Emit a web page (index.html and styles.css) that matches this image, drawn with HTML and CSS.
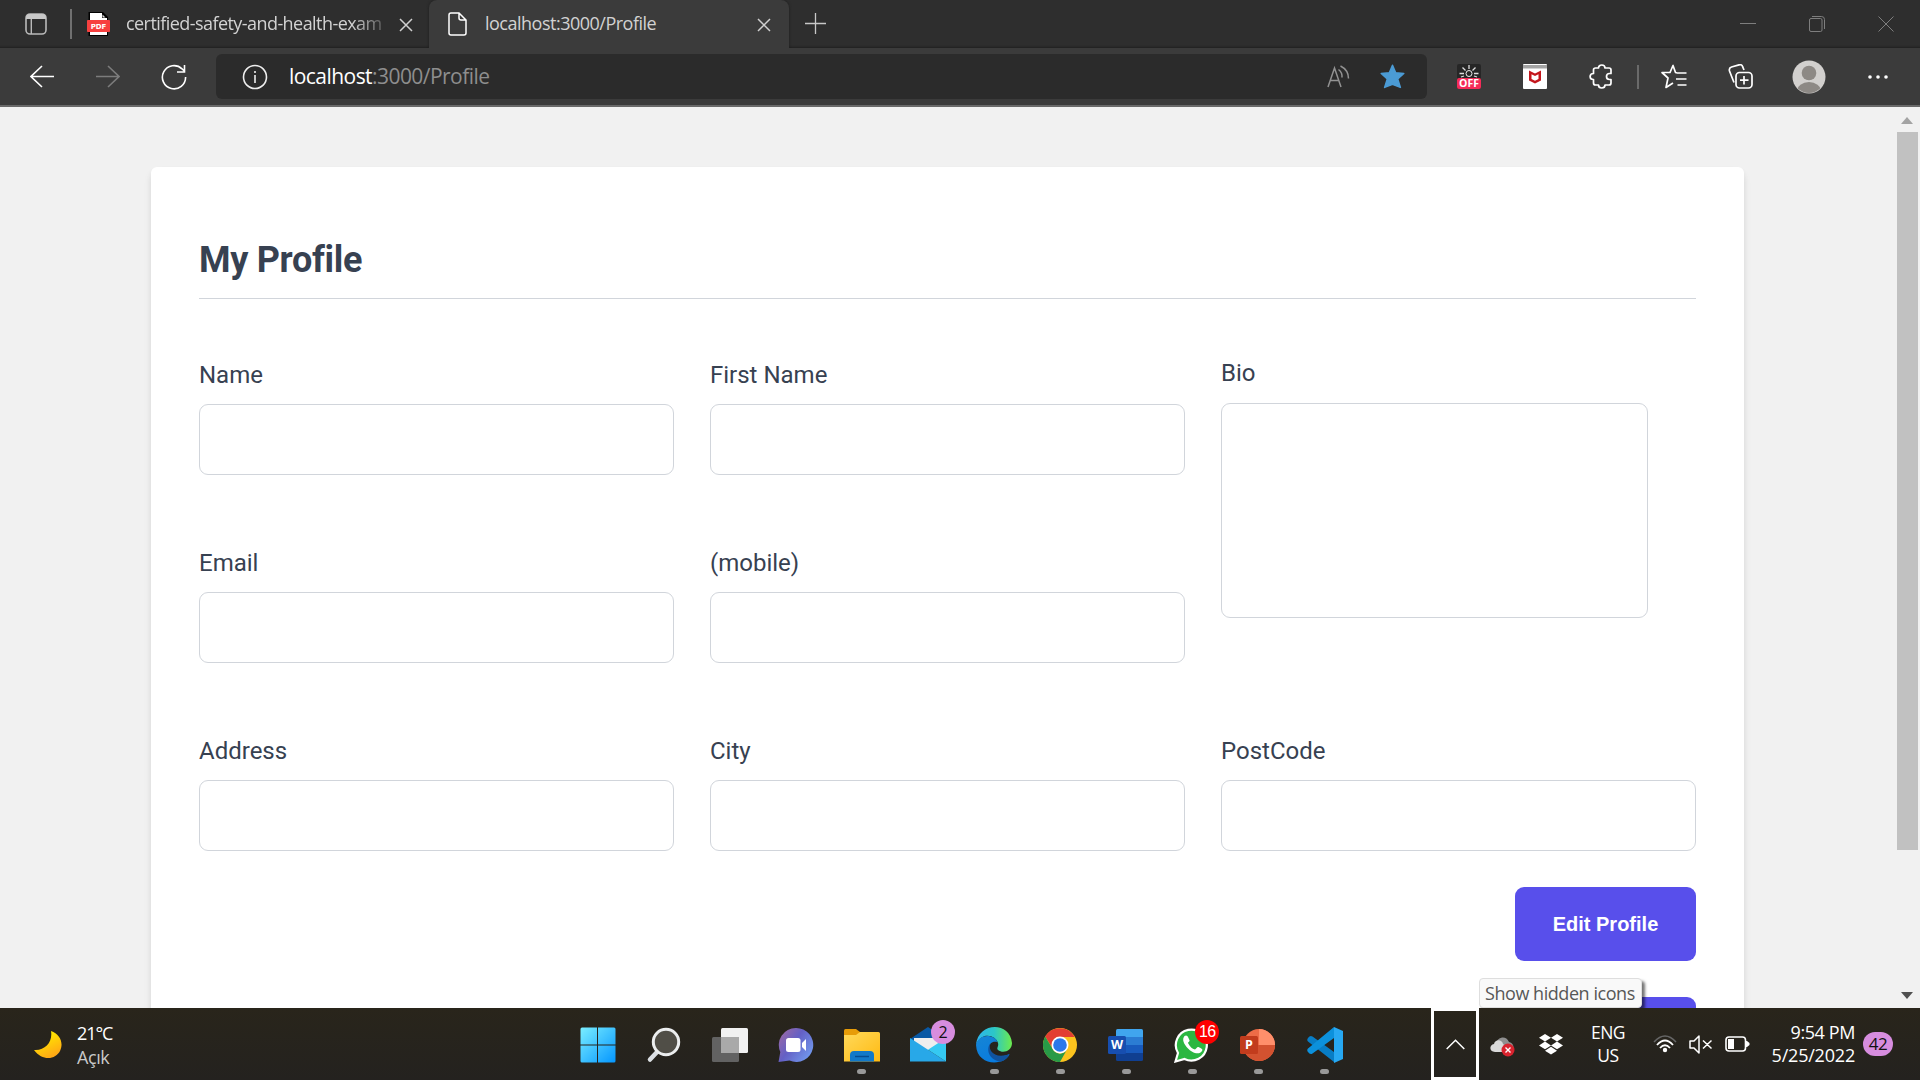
FILE: index.html
```html
<!DOCTYPE html>
<html lang="en">
<head>
<meta charset="utf-8">
<title>localhost:3000/Profile</title>
<link rel="stylesheet" href="styles.css">
</head>
<body>
<div class="screen">
  <header class="tabbar">
    <div class="tab-actions"><svg width="22" height="22" viewBox="0 0 22 22"><rect x="1" y="1" width="20" height="20" rx="4" fill="none" stroke="#b9b9b9" stroke-width="1.6"/><path d="M1 6V5a4 4 0 0 1 4-4h12a4 4 0 0 1 4 4v1z" fill="#c8c8c8"/><path d="M6.3 6v15" stroke="#b9b9b9" stroke-width="1.4"/></svg></div>
    <div class="tab">
      <svg width="23" height="24" viewBox="0 0 23 24"><path d="M1.500 0H16l5 5v19H1.500z" fill="#000"/><path d="M3 1h12v5h5v17H3z" fill="#fff"/><path d="M15.500 2.500l3 3h-3z" fill="#ddd"/><rect y="8" width="23" height="12" rx=".8" fill="#f7403f"/><text x="11.500" y="17" class="pdf-text">PDF</text></svg>
      <span class="tab-title faded">certified-safety-and-health-exam</span>
      <svg class="tab-close" width="14" height="14" viewBox="0 0 14 14"><path d="M1 1l12 12M13 1L1 13" stroke="#d0d0d0" stroke-width="1.5"/></svg>
    </div>
    <div class="tab active">
      <svg width="20" height="24" viewBox="0 0 20 24"><path d="M3 1h8l7 7v13a2 2 0 0 1-2 2H3a2 2 0 0 1-2-2V3a2 2 0 0 1 2-2zM11 1v5a2 2 0 0 0 2 2h5" fill="none" stroke="#fff" stroke-width="1.500"/></svg>
      <span class="tab-title">localhost:3000/Profile</span>
      <svg class="tab-close" width="14" height="14" viewBox="0 0 14 14"><path d="M1 1l12 12M13 1L1 13" stroke="#d0d0d0" stroke-width="1.500"/></svg>
    </div>
    <svg class="new-tab" width="21" height="21" viewBox="0 0 21 21"><path d="M10.500 0v21M0 10.500h21" stroke="#c8c8c8" stroke-width="1.300"/></svg>
    <div class="window-controls">
      <span><svg width="16" height="16"><path d="M0 7.500h16" stroke="#7e7e7e"/></svg></span>
      <span><svg width="16" height="16" fill="none" stroke="#7e7e7e"><rect x=".5" y="2.500" width="12.500" height="13" rx="1.500"/><path d="M3 .5h9.500a3 3 0 0 1 3 3V13"/></svg></span>
      <span><svg width="16" height="16"><path d="M.5.5l15 15M15.500.5l-15 15" stroke="#7e7e7e"/></svg></span>
    </div>
  </header>

  <nav class="toolbar">
    <div class="nav-buttons">
      <span><svg width="24" height="24" fill="none" stroke="#fff" stroke-width="1.600"><path d="M24 11.500H1M12 1L1 11.500 12 22"/></svg></span>
      <span><svg width="24" height="24" fill="none" stroke="#7c7c7c" stroke-width="1.600"><path d="M0 11.500h23M12 1l11 10.500L12 22"/></svg></span>
      <span><svg width="26" height="26" fill="none" stroke="#fff" stroke-width="1.600"><path d="M24.600 13A11.600 11.600 0 1 1 21 4.800l2 2M23.500 1v7H16"/></svg></span>
    </div>
    <div class="address">
      <svg width="26" height="26" fill="none" stroke="#eee" stroke-width="1.600"><circle cx="13" cy="13" r="11.500"/><path d="M13 11v8M13 7v2" /></svg>
      <span class="url"><b>localhost</b>:3000/Profile</span>
      <svg class="read-aloud" width="23" height="23" fill="none" stroke="#929292" stroke-width="1.500"><path d="M1 22L7.500 3 14 22M3.500 15.500h8M11.500 4.500q4 3 3.500 8M13.500 1q8 4 8 12.500"/></svg>
      <svg width="25" height="25" viewBox="0 0 25 25"><path d="M12.500 1.200l3.200 7.500 8.100.8-6.100 5.500 2.700 8.400-7.900-3-7.900 3L7.300 15 1.200 9.500l8.100-.8z" fill="#4b9bd5" stroke="#4b9bd5" stroke-width="1.500" stroke-linejoin="round"/></svg>
    </div>
    <div class="tools">
      <span><svg width="24" height="25" viewBox="0 0 24 25"><rect width="24" height="25" rx="2" fill="#262626"/><circle cx="12" cy="9.500" r="3" fill="none" stroke="#eee"/><path d="M12 1v4M5.500 3.500l3 3M18.500 3.500l-3 3M2.500 9.500h4.500M21.500 9.500H17M4 13l3-1M20 13l-3-1" stroke="#ddd" stroke-width="1.300"/><rect y="14" width="24" height="11" rx="2" fill="#f52b58"/><text x="12" y="23.300" class="off-text">OFF</text></svg></span>
      <span><svg width="24" height="25" viewBox="0 0 24 25"><rect width="24" height="25" rx="1" fill="#fff"/><path d="M0 1h24v3.500H0z" fill="#a4a4a4"/><path d="M6 6.500l6 3 6-3v10l-6 3-6-3zM8.500 10.300V15l3.500 1.800 3.500-1.800v-4.700L12 12z" fill="#c4161c" fill-rule="evenodd"/></svg></span>
      <span><svg width="24" height="25" viewBox="0 0 24 25"><path d="M6.500 4H9.500C9.500 0 16 0 16 4h4q2 0 2 2v3.500h-1.500c-4 0-4 6 0 6H22V19q0 2-2 2h-4c0 4-6.500 4-6.500 0h-3q-2 0-2-2v-3.500c-4.500 0-4.500-6 0-6V6q0-2 2-2z" fill="none" stroke="#fff" stroke-width="1.700" stroke-linejoin="round"/></svg></span>
      <i class="divider"></i>
      <span><svg width="26" height="25" viewBox="0 0 26 25" fill="none" stroke="#fff" stroke-width="1.700" stroke-linejoin="round"><path d="M16 9l-1.500-.5L12 1.500 9 8.500H1l6 5.500-2 9.500L12 19M16 9h9.500M15 15h10.500M16.500 21h9"/></svg></span>
      <span><svg width="25" height="25" viewBox="0 0 25 25" fill="none" stroke="#fff" stroke-width="1.700"><rect x="8" y="8.500" width="16" height="15.500" rx="3.500"/><path d="M16 12v8.500M12 16.200h8.500M6 18.500L1.500 7q-.8-3 2-4L11 .9q3-.7 3.500 1.500L16 6"/></svg></span>
      <span class="avatar-cell"><svg width="34" height="34" viewBox="0 0 34 34"><clipPath id="face"><circle cx="17" cy="17" r="16"/></clipPath><circle cx="17" cy="17" r="16.500" fill="#d2d0ce"/><g fill="#8d8985" clip-path="url(#face)"><circle cx="17" cy="13" r="7.300"/><ellipse cx="17" cy="31" rx="12" ry="9"/></g></svg></span>
      <span><svg width="20" height="4" fill="#fff"><circle cx="2" cy="2" r="1.800"/><circle cx="10" cy="2" r="1.800"/><circle cx="18" cy="2" r="1.800"/></svg></span>
    </div>
  </nav>

  <div class="viewport">
    <main class="card">
      <h1>My Profile</h1>
      <form class="fields">
        <label class="field">Name<input type="text"></label>
        <label class="field">First Name<input type="text"></label>
        <label class="field bio">Bio<textarea></textarea></label>
        <label class="field">Email<input type="text"></label>
        <label class="field">(mobile)<input type="text"></label>
        <label class="field">Address<input type="text"></label>
        <label class="field">City<input type="text"></label>
        <label class="field">PostCode<input type="text"></label>
      </form>
      <div class="actions">
        <button type="button">Edit Profile</button>
        <button type="button"></button>
      </div>
    </main>
    <aside class="scrollbar">
      <svg width="12" height="7"><path d="M0 7l6-7 6 7z" fill="#a3a3a3"/></svg>
      <div class="thumb"></div>
      <svg width="12" height="7"><path d="M0 0h12L6 7z" fill="#505050"/></svg>
    </aside>
    <div class="tooltip">Show hidden icons</div>
  </div>

  <footer class="taskbar">
    <div class="weather">
      <svg width="30" height="30" viewBox="0 0 30 30"><defs><linearGradient id="moon" x1="0" y1="0" x2=".5" y2="1"><stop offset=".3" stop-color="#ffe500"/><stop offset="1" stop-color="#ffa915"/></linearGradient></defs><path d="M18 1C27 4 31 13 27 21S10 32 1 20C12 21 20 12 18 1z" fill="url(#moon)"/></svg>
      <div><div>21°C</div><div class="condition">Açık</div></div>
    </div>
    <div class="apps">
      <span><svg width="36" height="36" viewBox="0 0 36 36"><defs><linearGradient id="win" x1="0" y1="0" x2="1" y2="1"><stop stop-color="#7aeeff"/><stop offset="1" stop-color="#0496ff"/></linearGradient></defs><path d="M2 .5h15v17H.5V2Q.5.500 2 .5zM18 .5h16q1.500 0 1.500 1.500v15.500H18zM.5 18.500H17v17H2q-1.500 0-1.500-1.500zM18 18.500h17.500V34q0 1.500-1.500 1.500H18z" fill="url(#win)"/></svg></span>
      <span><svg width="36" height="36" viewBox="0 0 36 36"><path d="M12 24L4 32.500" stroke="#dce0e4" stroke-width="4.500" stroke-linecap="round"/><circle cx="20" cy="15" r="12.700" fill="#504e47" stroke="#eceeef" stroke-width="3"/></svg></span>
      <span><svg width="36" height="36" viewBox="0 0 36 36"><rect y="10" width="27" height="25" rx="1.500" fill="#626262"/><rect x="9" y="1" width="27" height="25" rx="1.500" fill="#f1f1f1"/><path d="M9 10h18v16H9z" fill="#a9a9a9"/></svg></span>
      <span><svg width="36" height="36" viewBox="0 0 36 36"><defs><linearGradient id="chat" x1="0" y1="0" x2="1" y2=".7"><stop stop-color="#a56a9f"/><stop offset=".5" stop-color="#6460c5"/><stop offset="1" stop-color="#7197ec"/></linearGradient></defs><path d="M18 1a17 17 0 1 1-6.500 32.600L.5 35l1.800-10A17 17 0 0 1 18 1z" fill="url(#chat)"/><rect x="8" y="11" width="14.500" height="14" rx="2.500" fill="#fff"/><path d="M24 16l4-4v12l-4-4z" fill="#fff"/></svg></span>
      <span class="running"><svg width="36" height="36" viewBox="0 0 36 36"><defs><linearGradient id="folder" x1="0" y1="0" x2="1" y2="1"><stop stop-color="#ffd95b"/><stop offset="1" stop-color="#ffba12"/></linearGradient></defs><path d="M0 8V3.500Q0 2 1.500 2H12l4 3v4z" fill="#e79c08"/><path d="M0 8h12l4-3h18.500Q36 5 36 6.500V34.500H0z" fill="url(#folder)"/><path d="M6 34.500V28q0-4 4-4h16q4 0 4 4v6.500z" fill="#1279c9"/><path d="M11 29.500h14" stroke="#064c91" stroke-width="1.500"/></svg></span>
      <span><svg width="36" height="36" viewBox="0 0 36 36"><path d="M0 12L18 0l18 12v8H0z" fill="#0858a4"/><path d="M4 11h28v12H4z" fill="#eee"/><path d="M0 11l36 23.500H0z" fill="#28a8e8"/><path d="M36 11L18 22.800 36 34.500z" fill="#35c9f2"/></svg><em class="badge mail">2</em></span>
      <span class="running"><svg width="36" height="36" viewBox="0 0 36 36"><defs><linearGradient id="edgeTop"><stop stop-color="#2eb5ed"/><stop offset=".5" stop-color="#2cc6c8"/><stop offset="1" stop-color="#6ceb4d"/></linearGradient><linearGradient id="edgeLeft" x1="0" y1="0" x2=".6" y2="1"><stop stop-color="#1685d4"/><stop offset="1" stop-color="#087be0"/></linearGradient></defs><path d="M0 18C2-5 34-6 36 16c0 8-9 11-14 7-2-2 1-3 0-7-2-8-17-12-22 2z" fill="url(#edgeTop)"/><path d="M0 18C2 6 19 7 21.500 15 14 13 11 20 15 25c5 6 12 5 18.500 2C29 39 1 40 0 18z" fill="url(#edgeLeft)"/><path d="M15 16c-6 5-2 18 10 18.500 4-1 7-4 8.500-7.500-8 3-15 2-18.500-3-1.700-3-1.500-6 0-8z" fill="#10539f"/></svg></span>
      <span class="running"><svg width="36" height="36" viewBox="0 0 36 36"><circle cx="18" cy="18" r="17" fill="#fbc31e"/><path d="M3.200 9.600A17 17 0 0 1 32.800 10H18a8 8 0 0 0-7 12z" fill="#e33e33"/><path d="M3.200 9.600A17 17 0 0 0 18 35l7-12.500a8 8 0 0 1-14 0z" fill="#289a47"/><circle cx="18" cy="18" r="8.500" fill="#fff"/><circle cx="18" cy="18" r="6.800" fill="#2c78ea"/></svg></span>
      <span class="running"><svg width="36" height="36" viewBox="0 0 36 36"><path d="M8 3.500Q8 2 9.500 2h24Q35 2 35 3.500V10H8z" fill="#40a5ee"/><path d="M8 10h27v8H8z" fill="#2b7cd3"/><path d="M8 18h27v8H8z" fill="#185abd"/><path d="M8 26h27v6.500q0 1.500-1.500 1.500h-24Q8 34 8 32.500z" fill="#103f91"/><rect y="9" width="18" height="18" rx="1.500" fill="#174eaf"/><text x="9" y="22.300" class="office-text">W</text></svg></span>
      <span class="running"><svg width="36" height="36" viewBox="0 0 36 36"><path d="M1.500 34.500L4 26A15.500 15.500 0 1 1 10.500 32z" fill="#2bb741" stroke="#fff" stroke-width="2.200"/><path d="M10.500 9c3-2 4 2 5 4 .6 1.400-1.500 2-1.500 3 2 4 4 5.500 7 6.500 1.500-1 2-3 3.500-2.500 2 1 5 2 3.500 4-3 5-11 1-14-2.500-4-4-6.500-9-3.500-12.500z" fill="#fff"/></svg><em class="badge chat">16</em></span>
      <span class="running"><svg width="36" height="36" viewBox="0 0 36 36"><circle cx="19" cy="18" r="16" fill="#ed6c47"/><path d="M19 2a16 16 0 0 1 16 16H19z" fill="#ff8f6b"/><path d="M3 18h32a16 16 0 0 1-32 0z" fill="#d35230"/><rect y="9" width="18" height="18" rx="1.500" fill="#c23c1d"/><text x="9" y="22.300" class="office-text">P</text></svg></span>
      <span class="running"><svg width="36" height="36" viewBox="0 0 36 36"><path d="M1 11q2-3 4.500-1.500L27 25v10L1 14.500Q-.5 13 1 11z" fill="#087dc5"/><path d="M1 25q2 3 4.500 1.500L27 11V0L1 21.500Q-.5 23 1 25z" fill="#0c91dc"/><path d="M27 0l9 4v28l-9 4z" fill="#27a8f2"/></svg></span>
    </div>
    <div class="tray">
      <span class="chevron"><svg width="19" height="11"><path d="M.7 10L9.500 1.200 18.300 10" fill="none" stroke="#fff" stroke-width="1.500"/></svg></span>
      <span class="cloud"><svg width="25" height="21" viewBox="0 0 25 21"><path d="M6 7C8 1 16-1 19 6q5 1 4.500 7H10z" fill="#8f8f8f"/><path d="M5 16c-6 0-6-7-1-8 1-5 8-5 9 0l6 5v3z" fill="#d9d9d9"/><circle cx="18" cy="14" r="6.500" fill="#d9232e"/><path d="M15.500 11.500l5 5M20.500 11.500l-5 5" stroke="#fff" stroke-width="1.400"/></svg></span>
      <span class="dropbox"><svg width="24" height="21" viewBox="0 0 24 21" fill="#fff"><path d="M6 0l6 3.800-6 3.800L0 3.800zM18 0l6 3.800-6 3.800-6-3.800zM6 7.600l6 3.800-6 3.800-6-3.800zM18 7.600l6 3.800-6 3.800-6-3.800zM12 12.800l6 3.900-6 3.900-6-3.900z"/></svg></span>
      <div class="lang"><div>ENG</div><div>US</div></div>
      <div class="status">
        <svg width="24" height="18" viewBox="0 0 24 18" fill="none"><path d="M1 7Q12-5 23 7" stroke="#666" stroke-width="1.500"/><path d="M4 10Q12 1 20 10M7 13Q12 7.500 17 13" stroke="#fff" stroke-width="1.800"/><circle cx="12" cy="15" r="2.200" fill="#fff"/></svg>
        <svg width="24" height="19" viewBox="0 0 24 19" fill="none" stroke="#fff" stroke-width="1.500"><path d="M1 6h4l5-5v17l-5-5H1zM14 5.500l8.500 8M22.500 5.500l-8.500 8" stroke-linejoin="round"/></svg>
        <svg width="25" height="16" viewBox="0 0 25 16"><rect x="1" y="1" width="19.500" height="14" rx="3" fill="none" stroke="#fff" stroke-width="1.600"/><path d="M3 3h6v10H3zM21 5h1l2.500 2v2L22 11h-1z" fill="#fff"/></svg>
      </div>
      <div class="clock"><div>9:54 PM</div><div class="date">5/25/2022</div></div>
      <em class="notifications">42</em>
    </div>
  </footer>
</div>
</body>
</html>
```
FILE: styles.css
```css
* { box-sizing: border-box; }
body { margin: 0; overflow: hidden; font-family: "Open Sans", "Noto Sans", sans-serif; }
svg { display: block; flex: none; }
em { font-style: normal; }
.screen { width: 1920px; height: 1080px; display: flex; flex-direction: column; overflow: hidden; }

.tabbar { height: 48px; background: #2e2e2e; display: flex; align-items: center; color: #d2d2d2; box-shadow: inset 0 -3px 2px -2px #202020; }
.tab-actions { width: 72px; height: 30px; display: flex; align-items: center; padding-left: 25px; border-right: 2px solid #707070; }
.tab { height: 48px; display: flex; align-items: center; width: 357px; padding: 0 16px 0 15px; }
.tab.active { width: 360px; padding: 0 18px 0 19px; background: #3b3b3b; border-radius: 8px 8px 0 0; box-shadow: 0 0 3px #1d1d1d; clip-path: inset(0 -4px 0 -4px); }
.tab-title { font-size: 18px; letter-spacing: -.5px; white-space: nowrap; margin-left: 17px; line-height: 26px; padding-bottom: 2px; }
.tab-title.faded { width: 262px; margin-left: 16px; letter-spacing: -.56px; -webkit-mask-image: linear-gradient(90deg, #000 86%, rgba(0,0,0,.15)); mask-image: linear-gradient(90deg, #000 86%, rgba(0,0,0,.15)); }
.tab-close { margin-left: auto; margin-top: 2px; }
.new-tab { margin-left: 16px; margin-bottom: 1px; }
.window-controls { margin-left: auto; display: flex; }
.window-controls span { width: 69px; display: flex; justify-content: center; }
.pdf-text { font: 700 7px "DejaVu Sans", sans-serif; fill: #fff; text-anchor: middle; }

.toolbar { height: 59px; background: #3b3b3b; border-bottom: 2px solid #696969; display: flex; align-items: center; }
.nav-buttons { display: flex; width: 216px; padding-left: 9px; }
.nav-buttons span { width: 66px; display: flex; align-items: center; justify-content: center; }
.address { width: 1211px; height: 45px; border-radius: 6px; background: #2b2b2b; display: flex; align-items: center; padding: 0 22px 0 26px; }
.url { margin-left: 21px; font-size: 21px; letter-spacing: -.55px; color: #8e8e8e; line-height: 30px; padding-bottom: 2px; }
.url b { font-weight: 400; color: #fff; }
.read-aloud { margin-left: auto; margin-right: 30px; }
.tools { display: flex; align-items: center; padding-left: 9px; }
.tools span { width: 66px; display: flex; justify-content: center; }
.tools .divider { width: 2px; height: 24px; margin: 0 2px 0 3px; background: #6a6a6a; }
.tools .avatar-cell { width: 72px; }
.off-text { font: 700 10.5px "Open Sans", sans-serif; fill: #fff; text-anchor: middle; }

.viewport { height: 901px; position: relative; background: #f1f1f1; display: flex; justify-content: space-between; padding-left: 151px; overflow: hidden; }
.card { width: 1593px; height: 1040px; flex: none; margin-top: 60px; padding: 72px 48px 0; background: #fff; border-radius: 6px; box-shadow: 0 6px 9px -1px rgba(0,0,0,.1), 0 3px 6px -1px rgba(0,0,0,.06); font-family: Roboto, sans-serif; color: #374151; }
h1 { margin: 0; height: 60px; border-bottom: 1px solid #d1d5db; font-size: 36px; line-height: 42px; letter-spacing: -.3px; font-weight: 700; }
.fields { display: grid; grid-template-columns: repeat(3, 475px); grid-template-rows: repeat(3, 111px); gap: 77px 36px; height: 491px; margin: 61px 0 36px; padding-top: 1px; }
.field { font-size: 24px; line-height: 28px; display: flex; flex-direction: column; justify-content: space-between; height: 114px; }
.field input { width: 475px; height: 71px; border: 1px solid #d1d5db; border-radius: 9px; background: #fff; padding: 12px; }
.field textarea { width: 427px; height: 215px; border: 1px solid #d1d5db; border-radius: 9px; resize: none; background: #fff; }
.field.bio { grid-row: span 2; height: 259px; margin-top: -2px; }
.actions { display: flex; flex-direction: column; align-items: flex-end; gap: 36px; }
.actions button { width: 181px; height: 74px; border: 0; border-radius: 9px; background: #584feb; color: #fff; font: 700 20px "Liberation Sans", Arial, sans-serif; }
.scrollbar { width: 26px; padding: 10px 3px 9px; display: flex; flex-direction: column; align-items: center; }
.thumb { width: 21px; height: 718px; margin-top: 8px; margin-bottom: auto; background: #c1c1c1; }
.tooltip { position: absolute; left: 1479px; top: 871px; width: 163px; height: 30px; padding-left: 5px; border: 1px solid #dedede; border-radius: 4px; background: #f9f9f9; color: #575757; font-size: 18px; line-height: 28px; letter-spacing: -.45px; white-space: nowrap; box-shadow: 3px 3px 3px rgba(0,0,0,.55); }

.taskbar { height: 72px; display: flex; background: linear-gradient(#29251b, #24221f); color: #fff; }
.weather { width: 564.5px; display: flex; padding: 13px 0 0 33px; font-size: 18px; line-height: 24px; letter-spacing: -1.1px; }
.weather svg { margin: 9px 14px 0 0; }
.condition { color: #c9c9c9; letter-spacing: -.4px; }
.apps { display: flex; width: 866.5px; }
.apps span { width: 66.1px; flex: none; position: relative; display: flex; flex-direction: column; align-items: center; padding-top: 19px; }
.running::after { content: ""; width: 9px; height: 5px; border-radius: 3px; background: #999; margin-top: 6px; }
.badge { position: absolute; top: 12px; left: 36px; width: 24px; height: 24px; border-radius: 50%; text-align: center; font-size: 16px; line-height: 24px; }
.badge.mail { background: #d78ddf; color: #111; }
.badge.chat { background: #f00; color: #fff; font-family: "Liberation Sans", sans-serif; letter-spacing: -.5px; }
.office-text { font: 700 12.5px "Open Sans", sans-serif; fill: #fff; text-anchor: middle; }
.tray { display: flex; align-items: center; width: 489px; flex: none; }
.chevron { width: 48px; height: 72px; border: 3px solid #fff; display: flex; align-items: center; justify-content: center; }
.cloud { margin-left: 11px; padding-top: 4px; }
.dropbox { margin-left: 24px; }
.lang { width: 66px; margin-left: 12px; text-align: center; font-size: 17.5px; line-height: 23px; letter-spacing: -.5px; }
.status { display: flex; align-items: center; gap: 12px; margin-left: 12px; }
.clock { margin-left: auto; text-align: right; font-size: 18px; line-height: 23px; letter-spacing: -.4px; white-space: nowrap; }
.date { letter-spacing: -.2px; }
.notifications { width: 30px; height: 24px; margin: 0 27px 0 8px; border-radius: 12px; background: #d78ddf; color: #111; text-align: center; font-size: 17px; line-height: 24px; letter-spacing: -.5px; }
```
